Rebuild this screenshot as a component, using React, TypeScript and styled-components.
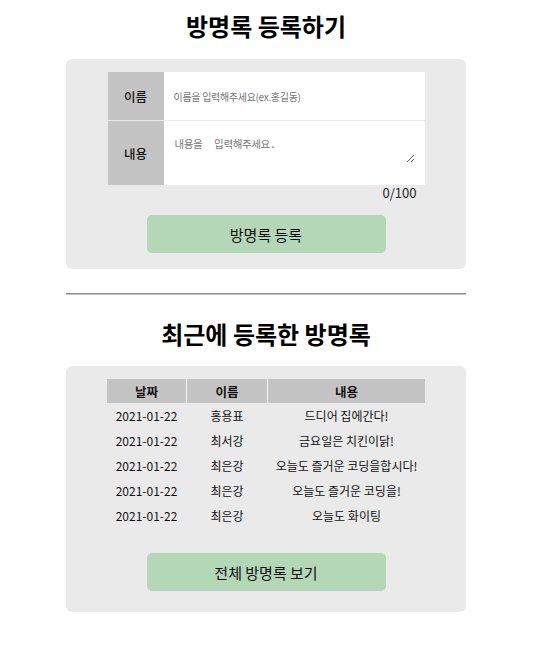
import React from "react";
import styled, { createGlobalStyle } from "styled-components";

const GlobalStyle = createGlobalStyle`
  html, body { margin: 0; padding: 0; background: #fff; }
  body { font-family: "Noto Sans CJK KR", "Noto Sans", sans-serif; color: #111; }
  * { box-sizing: border-box; }
`;

const Page = styled.div`
  width: 400px;
  margin-left: 66px;
  padding-top: 8px;
  padding-bottom: 40px;
`;

const Title = styled.h1<{ $gap: number }>`
  margin: 0 0 ${(p) => p.$gap}px;
  font-size: 24px;
  line-height: 36px;
  font-weight: 700;
  text-align: center;
  color: #000;
`;

const Panel = styled.section<{ $bottom: number }>`
  background: #eaeaea;
  border-radius: 6px;
  padding: 13px 0 ${(p) => p.$bottom}px;
  display: flex;
  flex-direction: column;
  align-items: center;
`;

const Form = styled.div`
  width: 317px;
  display: flex;
  flex-direction: column;
  gap: 1px;
`;

const FormRow = styled.div<{ $h: number }>`
  display: grid;
  grid-template-columns: 56px 1fr;
  height: ${(p) => p.$h}px;
`;

const Label = styled.div`
  background: #c4c4c4;
  display: flex;
  align-items: center;
  justify-content: center;
  font-size: 12.5px;
  font-weight: 500;
  color: #111;
`;

const Field = styled.div<{ $pt: number }>`
  background: #fff;
  padding: ${(p) => p.$pt}px 10px 0 10px;
  display: flex;
  align-items: ${(p) => (p.$pt ? "flex-start" : "center")};
`;

const TextInput = styled.input`
  border: none;
  outline: none;
  width: 100%;
  background: transparent;
  font-family: "Noto Sans CJK KR", sans-serif;
  font-size: 10px;
  letter-spacing: -0.3px;
  padding: 0;
  &::placeholder { color: #777; }
`;

const TextArea = styled.textarea`
  border: none;
  outline: none;
  width: 100%;
  height: 28px;
  padding: 1px;
  background: transparent;
  font-family: "DejaVu Sans Mono", "Noto Sans CJK KR", monospace;
  font-size: 10.5px;
  letter-spacing: -0.4px;
  &::placeholder { color: #777; }
`;

const Counter = styled.div`
  width: 317px;
  text-align: right;
  padding-right: 8px;
  font-size: 13px;
  line-height: 16px;
  color: #222;
`;

const Button = styled.button<{ $top: number }>`
  margin-top: ${(p) => p.$top}px;
  width: 239px;
  height: 38px;
  border: none;
  border-radius: 5px;
  background: #b3d7b7;
  font-family: "Noto Sans CJK KR", sans-serif;
  font-size: 15px;
  color: #111;
  cursor: pointer;
`;

const Divider = styled.hr`
  margin: 24px 0 21px;
  height: 0;
  border: none;
  border-top: 1px solid #8a8a8a;
  border-bottom: 1px solid #c8c8c8;
`;

const Table = styled.div`
  width: 318px;
  display: flex;
  flex-direction: column;
`;

const TableRow = styled.div<{ $head?: boolean }>`
  display: grid;
  grid-template-columns: 79px 80px 157px;
  column-gap: 1px;
  height: ${(p) => (p.$head ? 24 : 25)}px;
  background: ${(p) => (p.$head ? "#f4f4f4" : "transparent")};
`;

const Cell = styled.div<{ $head?: boolean }>`
  display: flex;
  align-items: center;
  justify-content: center;
  font-size: ${(p) => (p.$head ? 12.5 : 12)}px;
  font-weight: ${(p) => (p.$head ? 700 : 400)};
  background: ${(p) => (p.$head ? "#c4c4c4" : "transparent")};
  color: #111;
  white-space: nowrap;
`;

const entries = [
  { date: "2021-01-22", name: "홍용표", text: "드디어 집에간다!" },
  { date: "2021-01-22", name: "최서강", text: "금요일은 치킨이닭!" },
  { date: "2021-01-22", name: "최은강", text: "오늘도 즐거운 코딩을합시다!" },
  { date: "2021-01-22", name: "최은강", text: "오늘도 즐거운 코딩을!" },
  { date: "2021-01-22", name: "최은강", text: "오늘도 화이팅" },
];

export default function App() {
  return (
    <>
      <GlobalStyle />
      <Page>
        <Title $gap={15}>방명록 등록하기</Title>
        <Panel $bottom={16}>
          <Form>
            <FormRow $h={48}>
              <Label>이름</Label>
              <Field $pt={0}>
                <TextInput placeholder="이름을 입력해주세요(ex.홍길동)" />
              </Field>
            </FormRow>
            <FormRow $h={64}>
              <Label>내용</Label>
              <Field $pt={14}>
                <TextArea placeholder="내용을  입력해주세요." />
              </Field>
            </FormRow>
          </Form>
          <Counter>0/100</Counter>
          <Button $top={14}>방명록 등록</Button>
        </Panel>
        <Divider />
        <Title $gap={14}>최근에 등록한 방명록</Title>
        <Panel $bottom={21}>
          <Table>
            <TableRow $head>
              <Cell $head>날짜</Cell>
              <Cell $head>이름</Cell>
              <Cell $head>내용</Cell>
            </TableRow>
            {entries.map((e, i) => (
              <TableRow key={i}>
                <Cell>{e.date}</Cell>
                <Cell>{e.name}</Cell>
                <Cell>{e.text}</Cell>
              </TableRow>
            ))}
          </Table>
          <Button $top={25}>전체 방명록 보기</Button>
        </Panel>
      </Page>
    </>
  );
}
